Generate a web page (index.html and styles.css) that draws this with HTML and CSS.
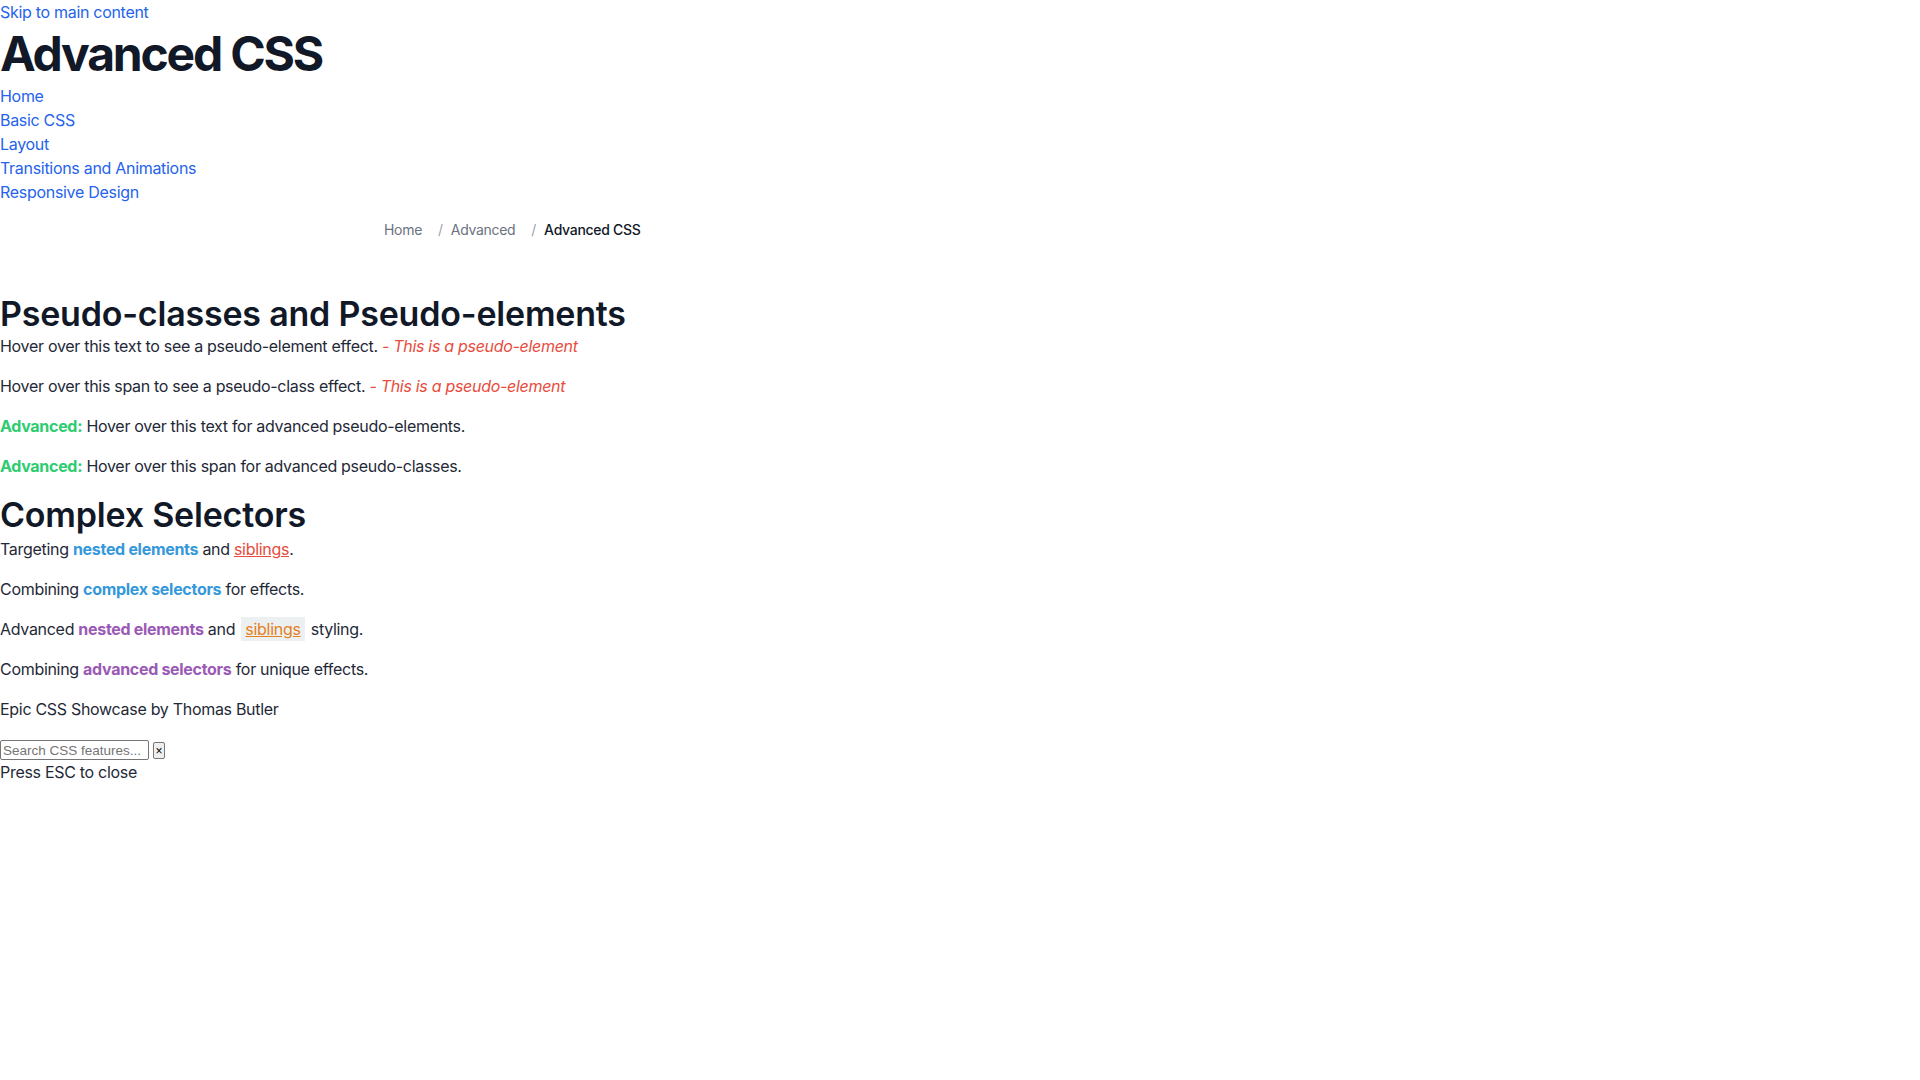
FILE: index.html
```html
<!DOCTYPE html>
<html lang="en">
<head>
<meta charset="utf-8">
<title>Advanced CSS</title>
<link rel="stylesheet" href="styles.css">
</head>
<body>
<header class="site-header">
  <a class="skip-link" href="#main">Skip to main content</a>
  <h1 class="site-title">Advanced CSS</h1>
  <nav class="main-nav">
    <ul class="nav-list">
      <li><a href="#">Home</a></li>
      <li><a href="#">Basic CSS</a></li>
      <li><a href="#">Layout</a></li>
      <li><a href="#">Transitions and Animations</a></li>
      <li><a href="#">Responsive Design</a></li>
    </ul>
  </nav>
</header>
<nav class="breadcrumb-wrap" aria-label="Breadcrumb">
  <ol class="breadcrumb">
    <li class="crumb"><span class="crumb-link">Home</span></li>
    <li class="crumb"><span class="crumb-sep">/</span><span class="crumb-link">Advanced</span></li>
    <li class="crumb"><span class="crumb-sep">/</span><span class="crumb-current">Advanced CSS</span></li>
  </ol>
</nav>
<main id="main" class="main">
  <section class="section">
    <h2 class="section-title">Pseudo-classes and Pseudo-elements</h2>
    <p class="para">Hover over this text to see a pseudo-element effect. <span class="pseudo-note">- This is a pseudo-element</span></p>
    <p class="para">Hover over this span to see a pseudo-class effect. <span class="pseudo-note">- This is a pseudo-element</span></p>
    <p class="para"><span class="adv-label">Advanced:</span> Hover over this text for advanced pseudo-elements.</p>
    <p class="para"><span class="adv-label">Advanced:</span> Hover over this span for advanced pseudo-classes.</p>
  </section>
  <section class="section">
    <h2 class="section-title">Complex Selectors</h2>
    <p class="para">Targeting <span class="nested-blue">nested elements</span> and <span class="sib-red">siblings</span>.</p>
    <p class="para">Combining <span class="nested-blue">complex selectors</span> for effects.</p>
    <p class="para">Advanced <span class="nested-purple">nested elements</span> and <span class="sib-orange">siblings</span> styling.</p>
    <p class="para">Combining <span class="nested-purple">advanced selectors</span> for unique effects.</p>
  </section>
</main>
<footer class="footer">
  <p class="para">Epic CSS Showcase by Thomas Butler</p>
</footer>
<div class="search-row"><input class="search-input" type="text" placeholder="Search CSS features..."> <button class="search-close" type="button">×</button></div>
<div class="search-hint">Press ESC to close</div>
</body>
</html>
```
FILE: styles.css
```css
html, body {
  margin: 0;
  padding: 0;
  background: #ffffff;
}
body {
  font-family: Inter, "Noto Sans", sans-serif;
  font-size: 16px;
  line-height: 24px;
  letter-spacing: -0.3px;
  color: #1f2937;
}
a {
  color: #2563eb;
  text-decoration: none;
}
.skip-link {
  display: block;
}
.site-title {
  margin: 0;
  font-size: 48px;
  line-height: 60px;
  font-weight: 700;
  letter-spacing: -2.2px;
  color: #111827;
}
.nav-list {
  list-style: none;
  margin: 0;
  padding: 0;
}
.breadcrumb-wrap {
  max-width: 1152px;
  margin: 0 auto;
  padding: 16px 0;
}
.breadcrumb {
  display: flex;
  gap: 8px;
  list-style: none;
  margin: 0;
  padding: 0;
  font-size: 14px;
  line-height: 20px;
  letter-spacing: -0.3px;
}
.crumb {
  display: flex;
  align-items: center;
}
.crumb-sep {
  margin: 0 8px;
  color: #9ca3af;
}
.crumb-link {
  color: #6b7280;
}
.crumb-current {
  color: #111827;
  font-weight: 500;
}
.main {
  padding-top: 32px;
}
.section + .section {
  margin-top: 5px;
}
.section-title {
  margin: 5px 0 0;
  font-size: 34px;
  line-height: 41px;
  font-weight: 600;
  letter-spacing: -0.2px;
  color: #111827;
}
.section + .section .section-title {
  margin-bottom: 2px;
}
.para {
  margin: 0 0 16px;
}
.pseudo-note {
  color: #e74c3c;
  font-style: italic;
}
.adv-label {
  color: #2ecc71;
  font-weight: 700;
}
.nested-blue {
  color: #3498db;
  font-weight: 700;
}
.sib-red {
  color: #e74c3c;
  text-decoration: underline;
}
.nested-purple {
  color: #9b59b6;
  font-weight: 700;
}
.sib-orange {
  color: #e67e22;
  text-decoration: underline;
  background: #ecf0f1;
  padding: 2px 4px;
  margin: 0 2px;
}
.search-row {
  height: 23px;
  display: flex;
  align-items: flex-end;
  gap: 4px;
  letter-spacing: normal;
}
.search-input {
  box-sizing: border-box;
  width: 149px;
  height: 20px;
  margin: 0;
  padding: 1px 2px;
  border: 1px solid #767676;
  border-radius: 2px;
  font-family: "Liberation Sans", Arial, sans-serif;
  font-size: 13.5px;
}
.search-input::placeholder {
  color: #757575;
}
.search-close {
  box-sizing: border-box;
  width: 12px;
  height: 17px;
  margin: 0 0 1px;
  padding: 0;
  border: 1px solid #767676;
  border-radius: 2px;
  background: #efefef;
  font-family: "Liberation Sans", Arial, sans-serif;
  font-size: 12px;
  line-height: 14px;
  color: #000;
}
.search-hint {
  line-height: 24px;
}
```
